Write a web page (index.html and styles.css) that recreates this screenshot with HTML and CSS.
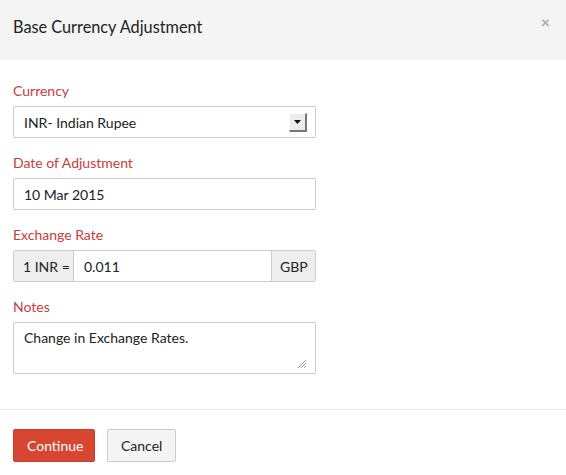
FILE: index.html
```html
<!DOCTYPE html>
<html>
<head>
<meta charset="utf-8">
<link rel="stylesheet" href="styles.css">
</head>
<body>
<div class="modal">
  <div class="modal-header">
    <h4 class="title">Base Currency Adjustment</h4>
    <span class="close">&times;</span>
  </div>
  <div class="modal-body">
    <div class="field">
      <label class="label">Currency</label>
      <div class="control select">
        <span>INR- Indian Rupee</span>
        <span class="arrow"><svg width="7" height="4" viewBox="0 0 7 4"><path d="M0 0h7L3.5 4z" fill="#111"/></svg></span>
      </div>
    </div>
    <div class="field">
      <label class="label">Date of Adjustment</label>
      <div class="control">10 Mar 2015</div>
    </div>
    <div class="field">
      <label class="label">Exchange Rate</label>
      <div class="group">
        <span class="addon left">1 INR =</span>
        <span class="group-input">0.011</span>
        <span class="addon right">GBP</span>
      </div>
    </div>
    <div class="field">
      <label class="label">Notes</label>
      <div class="control textarea">Change in Exchange Rates.
        <svg class="grip" width="9" height="9" viewBox="0 0 9 9"><path d="M9 1L1 9M9 4L4 9M9 7L7 9" stroke="#999" stroke-width="1"/></svg>
      </div>
    </div>
  </div>
  <div class="modal-footer">
    <button class="btn primary">Continue</button>
    <button class="btn">Cancel</button>
  </div>
</div>
</body>
</html>
```
FILE: styles.css
```css
* { box-sizing: border-box; }
html, body { margin: 0; padding: 0; background: #fff; }
body { font-family: Lato, "Liberation Sans", sans-serif; color: #222; font-size: 14px; }
.modal { width: 566px; }
.modal-header {
  height: 60px; background: #f4f4f4;
  display: flex; justify-content: space-between; align-items: flex-start;
  padding: 17px 16px 0 13px;
}
.title { margin: 0; font-weight: 400; font-size: 16.3px; line-height: 20px; color: #222; }
.close { color: #aaa; font-size: 16px; line-height: 12px; font-weight: 700; margin-top: -1px; }
.modal-body { padding: 22px 250px 35px 13px; border-bottom: 1px solid #e8e8e8; }
.field { display: flex; flex-direction: column; margin-bottom: 16px; }
.field:last-child { margin-bottom: 0; }
.label { color: #c83c3a; font-size: 14px; line-height: 17px; margin-bottom: 7px; }
.control {
  height: 32px; border: 1px solid #ccc; border-radius: 2px;
  padding: 0 10px; display: flex; align-items: center; color: #222;
}
.select { justify-content: space-between; padding-right: 8px; }
.arrow {
  width: 18px; height: 19px; background: #ececec;
  border-left: 1px solid #fff; border-top: 1px solid #fff;
  border-right: 2px solid #777; border-bottom: 2px solid #777;
  display: flex; align-items: center; justify-content: center;
}
.group { display: flex; height: 32px; border: 1px solid #ccc; border-radius: 2px; }
.addon { background: #eee; display: flex; align-items: center; padding: 0 9px; color: #222; white-space: nowrap; flex-shrink: 0; }
.addon.left { border-right: 1px solid #ccc; width: 60px; }
.addon.right { border-left: 1px solid #ccc; width: 44px; padding: 0 8px; }
.group-input { flex: 1; display: flex; align-items: center; padding: 0 10px; }
.textarea { height: 52px; align-items: flex-start; padding-top: 6px; position: relative; }
.grip { position: absolute; right: 9px; bottom: 5px; }
.modal-footer { padding: 19px 13px; display: flex; gap: 12px; }
.btn {
  height: 33px; font-family: inherit; font-size: 14px; border: 1px solid #ccc;
  background: #f4f4f4; color: #222; border-radius: 2px; padding: 0 13px;
}
.btn.primary { background: #d64631; border-color: #c43e2a; color: #fff; width: 82px; }
```
